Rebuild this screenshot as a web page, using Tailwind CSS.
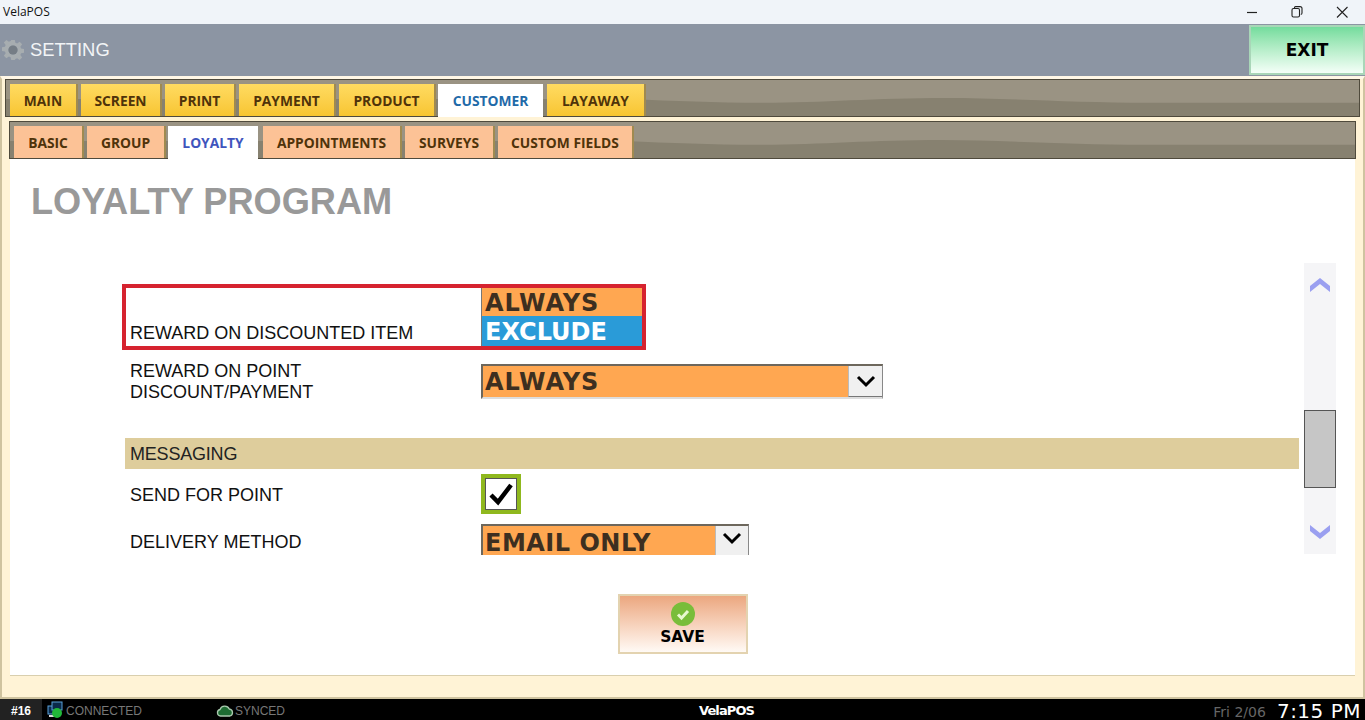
<!DOCTYPE html>
<html lang="en">
<head>
<meta charset="UTF-8">
<title>VelaPOS</title>
<script src="https://cdn.jsdelivr.net/npm/@tailwindcss/browser@4"></script>
</head>
<body class="bg-white">
<div class="w-[1365px] h-[720px] flex flex-col overflow-hidden font-['Liberation_Sans',sans-serif]">

  <!-- window title bar -->
  <div class="h-[24px] shrink-0 bg-[#f0f4f9] flex items-center justify-between">
    <span class="pl-[3px] text-[12px] text-[#111] font-['Open_Sans',sans-serif]">VelaPOS</span>
    <div class="flex items-center pr-[16px] gap-[31px]">
      <svg width="14" height="14" viewBox="0 0 14 14"><path d="M2 7.500h10" stroke="#222" stroke-width="1.200"/></svg>
      <svg width="14" height="14" viewBox="0 0 14 14" fill="none" stroke="#222" stroke-width="1.100"><rect x="2" y="3.500" width="7.500" height="8.500" rx="1.500"/><path d="M4.500 3.200V2.600c0-.6.4-1 1-1h4.500c1.200 0 2 .8 2 2V8c0 .8-.4 1.300-1.200 1.500"/></svg>
      <svg width="14" height="14" viewBox="0 0 14 14"><path d="M2 2l10.500 10.500M12.500 2L2 12.500" stroke="#222" stroke-width="1.100"/></svg>
    </div>
  </div>

  <!-- header -->
  <div class="h-[52px] shrink-0 bg-[#8c95a3] flex items-center justify-between">
    <div class="flex items-center">
      <svg class="ml-[2px]" width="22" height="22" viewBox="0 0 24 24">
        <path fill="#a7adb0" fill-rule="evenodd" d="M10 1h4l.6 3.200 1.900.8L19.200 3l2.800 2.800-2 2.700.8 1.900 3.200.6v4l-3.200.6-.8 1.900 2 2.700-2.800 2.800-2.700-2-1.900.8L14 23h-4l-.6-3.200-1.900-.8-2.700 2L2 18.200l2-2.700-.8-1.900L0 13V9l3.200-.6.800-1.900-2-2.700L4.800 1l2.700 2 1.900-.8zM12 7a5 5 0 1 0 0 10a5 5 0 0 0 0-10z"/>
        <circle cx="12" cy="12" r="5" fill="#757d85"/>
      </svg>
      <span class="ml-[6px] text-[18.400px] text-[#f2f4f6]">SETTING</span>
    </div>
    <div class="w-[116px] h-[50px] mb-[1px] pt-[2px] bg-gradient-to-b from-[#73dc9d] to-[#f4fff8] border-2 border-[#a9d6b8] flex items-center justify-center text-[17px] font-bold text-black font-['DejaVu_Sans',sans-serif]">EXIT</div>
  </div>

  <!-- settings panel -->
  <div class="flex-1 min-h-0 bg-[#fff3d6] border-l-[2px] border-r-[2px] border-b-[2px] border-t-[3px] border-[#cfc3a0] border-t-[#fff7e6] px-[3px] pb-[1px] flex flex-col">
    <div class="relative h-[38px] shrink-0 bg-[#8a8373] border border-[#4f4a3c] flex items-end pl-[4px] gap-[4px]">
      <svg class="absolute inset-0 w-full h-full" viewBox="0 0 1356 38" preserveAspectRatio="none"><rect width="1356" height="38" fill="#878170"/><path d="M0 0H1356V24C1280 24 1210 24 1145 24C1070 24 1000 19 942 19C870 19 820 24 758 24C710 24 670 22 625 20L0 20Z" fill="#9a9383"/></svg>
      <div class="relative w-[66px] h-[32px] mr-[1px] pt-[2px] bg-gradient-to-b from-[#ffdb60] to-[#f8c530] shadow-[2px_0_0_#a08a50] flex items-center justify-center text-[13.800px] font-bold text-[#4f330a] font-['Open_Sans',sans-serif]">MAIN</div>
      <div class="relative w-[79px] h-[32px] mr-[1px] pt-[2px] bg-gradient-to-b from-[#ffdb60] to-[#f8c530] shadow-[2px_0_0_#a08a50] flex items-center justify-center text-[13.800px] font-bold text-[#4f330a] font-['Open_Sans',sans-serif]">SCREEN</div>
      <div class="relative w-[69px] h-[32px] mr-[1px] pt-[2px] bg-gradient-to-b from-[#ffdb60] to-[#f8c530] shadow-[2px_0_0_#a08a50] flex items-center justify-center text-[13.800px] font-bold text-[#4f330a] font-['Open_Sans',sans-serif]">PRINT</div>
      <div class="relative w-[95px] h-[32px] mr-[1px] pt-[2px] bg-gradient-to-b from-[#ffdb60] to-[#f8c530] shadow-[2px_0_0_#a08a50] flex items-center justify-center text-[13.800px] font-bold text-[#4f330a] font-['Open_Sans',sans-serif]">PAYMENT</div>
      <div class="relative w-[95px] h-[32px] pt-[2px] bg-gradient-to-b from-[#ffdb60] to-[#f8c530] shadow-[2px_0_0_#a08a50] flex items-center justify-center text-[13.800px] font-bold text-[#4f330a] font-['Open_Sans',sans-serif]">PRODUCT</div>
      <div class="relative w-[105px] h-[33px] -mb-[1px] pt-[1px] bg-white flex items-center justify-center text-[13.800px] font-bold text-[#1f6aa8] font-['Open_Sans',sans-serif]">CUSTOMER</div>
      <div class="relative w-[97px] h-[32px] pt-[2px] bg-gradient-to-b from-[#ffdb60] to-[#f8c530] shadow-[2px_0_0_#a08a50] flex items-center justify-center text-[13.800px] font-bold text-[#4f330a] font-['Open_Sans',sans-serif]">LAYAWAY</div>
    </div>

    <div class="flex-1 min-h-0 mt-[4px] mx-[4px] flex flex-col">
      <div class="relative h-[38px] shrink-0 bg-[#8a8373] border border-[#4f4a3c] flex items-end pl-[4px] gap-[4px]">
        <svg class="absolute inset-0 w-full h-full" viewBox="0 0 1348 38" preserveAspectRatio="none"><rect width="1348" height="38" fill="#878170"/><path d="M0 0H1348V24C1272 24 1202 24 1137 24C1062 24 992 19 934 19C862 19 812 24 750 24C702 24 662 22 617 20L0 20Z" fill="#9a9383"/></svg>
        <div class="relative w-[68px] h-[32px] mr-[1px] pt-[2px] bg-[#fcc296] shadow-[2px_0_0_#a08a50] flex items-center justify-center text-[13.800px] font-bold text-[#4f330a] font-['Open_Sans',sans-serif]">BASIC</div>
        <div class="relative w-[77px] h-[32px] pt-[2px] bg-[#fcc296] shadow-[2px_0_0_#a08a50] flex items-center justify-center text-[13.800px] font-bold text-[#4f330a] font-['Open_Sans',sans-serif]">GROUP</div>
        <div class="relative w-[90px] h-[33px] -mb-[1px] mr-[1px] pt-[1px] bg-white flex items-center justify-center text-[13.800px] font-bold text-[#3f55bd] font-['Open_Sans',sans-serif]">LOYALTY</div>
        <div class="relative w-[137px] h-[32px] mr-[1px] pt-[2px] bg-[#fcc296] shadow-[2px_0_0_#a08a50] flex items-center justify-center text-[13.800px] font-bold text-[#4f330a] font-['Open_Sans',sans-serif]">APPOINTMENTS</div>
        <div class="relative w-[88px] h-[32px] mr-[1px] pt-[2px] bg-[#fcc296] shadow-[2px_0_0_#a08a50] flex items-center justify-center text-[13.800px] font-bold text-[#4f330a] font-['Open_Sans',sans-serif]">SURVEYS</div>
        <div class="relative w-[134px] h-[32px] pt-[2px] bg-[#fcc296] shadow-[2px_0_0_#a08a50] flex items-center justify-center text-[13.800px] font-bold text-[#4f330a] font-['Open_Sans',sans-serif]">CUSTOM FIELDS</div>
      </div>

      <!-- tab body -->
      <div class="h-[517px] shrink-0 bg-white mx-[1px] border-b border-[#d9cfae] flex flex-col">
        <h1 class="h-[105px] shrink-0 pl-[21px] pt-[21px] text-[36.200px] leading-[44px] font-bold text-[#999]">LOYALTY PROGRAM</h1>

        <div class="h-[291px] shrink-0 flex">
          <div class="w-[1177px] ml-[112px] pl-[3px] h-full overflow-hidden flex flex-col">
            <div class="h-[20px] shrink-0"></div>
            <div class="h-[66px] w-[524px] -ml-[3px] shrink-0 border-4 border-[#d6232f] flex">
              <div class="w-[355px] flex items-end pl-[4px] pb-[2px] text-[18px] leading-[22px] text-[#111]">REWARD ON DISCOUNTED ITEM</div>
              <div class="flex-1 flex flex-col font-['DejaVu_Sans',sans-serif] font-bold text-[24px] border-l border-[#777]">
                <div class="h-[28px] bg-[#ffa751] text-[#3d2f20] pl-[3px] leading-[30px] tracking-[1px]">ALWAYS</div>
                <div class="h-[30px] bg-[#2a9bd8] text-white pl-[3px] leading-[32px]">EXCLUDE</div>
              </div>
            </div>
            <div class="h-[48px] shrink-0 mt-[14px] flex">
              <div class="w-[356px] pl-[5px] -mt-[3px] text-[18px] leading-[21px] text-[#111]">REWARD ON POINT<br>DISCOUNT/PAYMENT</div>
              <div class="w-[402px] h-[35px] flex border-t-2 border-l-2 border-[#6d675c] border-r border-r-[#888] border-b-2 border-b-[#ddd] bg-[#ffa751]">
                <div class="flex-1 pl-[2px] font-['DejaVu_Sans',sans-serif] font-bold text-[24px] leading-[33px] tracking-[1px] text-[#3d2f20]">ALWAYS</div>
                <div class="w-[34px] bg-[#f0f0f0] border-l border-[#bbb] border-b border-b-[#777] flex items-center justify-center">
                  <svg width="22" height="14" viewBox="0 0 22 14" fill="none"><path d="M3 3l8 8 8-8" stroke="#000" stroke-width="3"/></svg>
                </div>
              </div>
            </div>
            <div class="h-[31px] mt-[26px] shrink-0 bg-[#decd9c] pl-[5px] pt-[1px] flex items-center text-[18px] tracking-[-0.200px] text-[#222]">MESSAGING</div>
            <div class="h-[40px] mt-[5px] shrink-0 flex items-center">
              <div class="w-[356px] pl-[5px] pt-[2px] text-[18px] text-[#111]">SEND FOR POINT</div>
              <div class="w-[40px] h-[40px] border-4 border-[#8fb81e] bg-white flex items-center justify-center outline outline-1 -outline-offset-5 outline-[#555]">
                <svg width="26" height="24" viewBox="0 0 26 24" fill="none"><path d="M3 13l7 7L23 3" stroke="#000" stroke-width="4.500"/></svg>
              </div>
            </div>
            <div class="mt-[10px] flex shrink-0">
              <div class="w-[356px] pl-[5px] pt-[7px] text-[18px] leading-[22px] text-[#111]">DELIVERY METHOD</div>
              <div class="w-[268px] h-[35px] flex border-t-2 border-l-2 border-[#6d675c] border-r border-r-[#888] bg-[#ffa751]">
                <div class="flex-1 pl-[2px] font-['DejaVu_Sans',sans-serif] font-bold text-[24px] leading-[34px] tracking-[0.500px] text-[#3d2f20]">EMAIL ONLY</div>
                <div class="w-[33px] bg-[#f0f0f0] border-l border-[#bbb] flex items-start pt-[5px] justify-center">
                  <svg width="22" height="14" viewBox="0 0 22 14" fill="none"><path d="M3 3l8 8 8-8" stroke="#000" stroke-width="3"/></svg>
                </div>
              </div>
            </div>
          </div>

          <!-- scroll bar -->
          <div class="w-[32px] h-[291px] -mt-[1px] ml-[5px] bg-[#f5f5f7] flex flex-col items-center">
            <svg class="mt-[14px]" width="22" height="16" viewBox="0 0 22 16"><path d="M1 15V9L11 1l10 8v6L11 7z" fill="#9a9ff0"/></svg>
            <div class="w-[32px] h-[78px] mt-[117px] bg-[#c6c6c6] border border-[#555]"></div>
            <svg class="mt-[36px]" width="22" height="16" viewBox="0 0 22 16"><path d="M1 1v6l10 8 10-8V1L11 9z" fill="#9a9ff0"/></svg>
          </div>
        </div>

        <!-- save -->
        <div class="flex justify-center mt-[39px]">
          <div class="w-[130px] h-[60px] bg-gradient-to-b from-[#eba77f] to-[#fffaf5] border-2 border-[#e3d3b0] flex flex-col items-center pt-[6px]">
            <svg width="24" height="24" viewBox="0 0 24 24"><circle cx="12" cy="12" r="12" fill="#79bd3a"/><path d="M7 12.500l3.500 3.500L17 9" stroke="#e8f8cf" stroke-width="3" fill="none"/></svg>
            <span class="text-[15.500px] leading-[23px] font-bold text-black font-['DejaVu_Sans',sans-serif]">SAVE</span>
          </div>
        </div>
      </div>
    </div>
  </div>

  <!-- status bar -->
  <div class="h-[21px] shrink-0 bg-black flex items-center text-[12px] relative">
    <div class="w-[42px] h-full bg-[#222] flex items-center justify-center font-bold text-white pt-[2px]">#16</div>
    <svg class="ml-[5px]" width="17" height="17" viewBox="0 0 17 17">
      <rect x="1" y="5" width="10" height="8" fill="#0b2a4a" stroke="#5aa0d8"/><rect x="5" y="1" width="10" height="8" fill="#0b2a4a" stroke="#5aa0d8"/><path d="M2 15h6" stroke="#ddd" stroke-width="2"/><circle cx="10" cy="12" r="5" fill="#22b83a"/>
    </svg>
    <span class="ml-[2px] w-[150px] pt-[2px] text-[#777]">CONNECTED</span>
    <svg class="mt-[2px]" width="18" height="12" viewBox="0 0 18 12"><path d="M4.500 11a3.300 3.300 0 0 1-.5-6.500A5 5 0 0 1 13.300 4 3.600 3.600 0 0 1 14 11z" fill="#1d6b32" stroke="#a9c9ae" stroke-width="1.300"/></svg>
    <span class="ml-[1px] pt-[2px] text-[#777]">SYNCED</span>
    <span class="absolute left-[699px] top-[2px] text-[13px] font-bold text-white font-['DejaVu_Sans',sans-serif] tracking-[-0.900px]">VelaPOS</span>
    <div class="ml-auto flex items-center pr-[4px] font-['DejaVu_Sans',sans-serif]">
      <span class="text-[14px] text-[#666] mt-[5px]">Fri 2/06</span>
      <span class="ml-[11px] mt-[3px] text-[20px] leading-[18px] text-white tracking-[0.500px]">7:15 PM</span>
    </div>
  </div>
</div>
</body>
</html>
